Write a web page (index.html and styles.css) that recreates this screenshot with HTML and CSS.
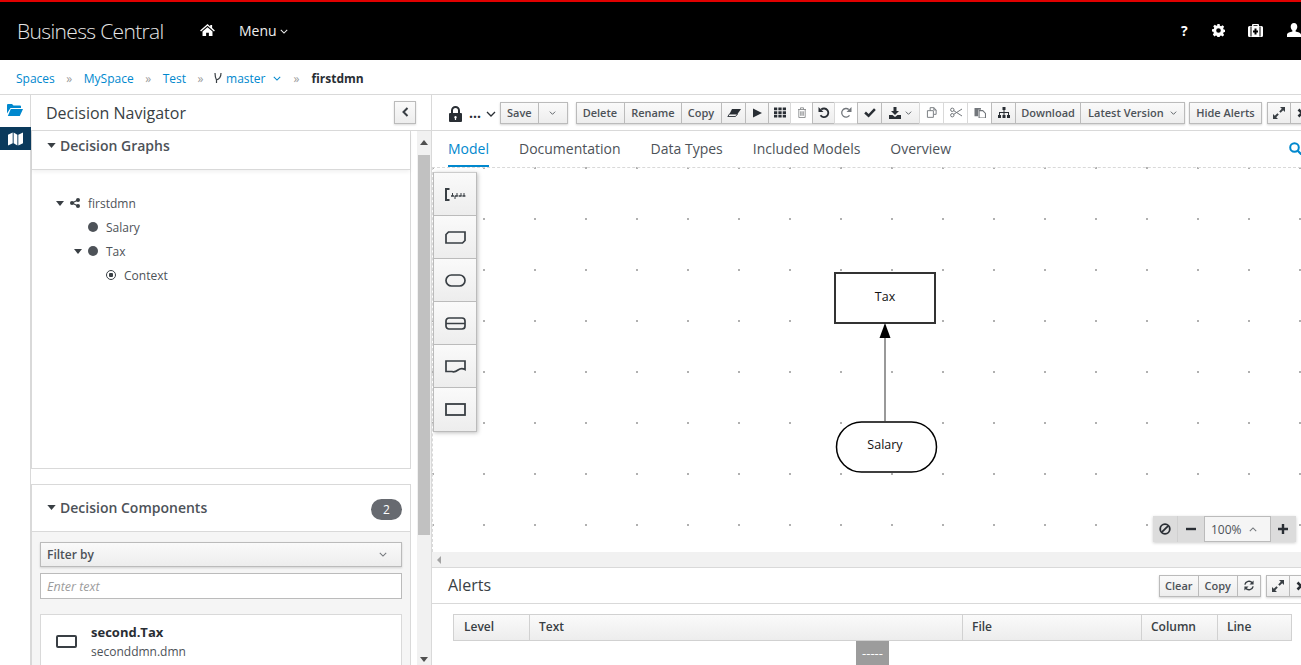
FILE: index.html
```html
<!DOCTYPE html>
<html lang="en">
<head>
<meta charset="utf-8">
<title>Business Central</title>
<link rel="stylesheet" href="styles.css">
</head>
<body>
<svg class="sprite" aria-hidden="true">
  <symbol id="chev" viewBox="0 0 10 6"><path d="M1 1l4 4 4-4" fill="none" stroke="currentColor" stroke-width="1.3"/></symbol>
  <symbol id="caret" viewBox="0 0 10 6"><path d="M0 0h10L5 6z" fill="currentColor"/></symbol>
  <symbol id="expand" viewBox="0 0 12 12"><path d="M7 0h5v5l-1.8-1.8L7.6 5.8 6.2 4.4l2.6-2.6zM5 12H0V7l1.8 1.8 2.6-2.6 1.4 1.4-2.6 2.6z" fill="currentColor"/></symbol>
  <symbol id="close" viewBox="0 0 10 10"><path d="M1.5 1.5l7 7M8.5 1.5l-7 7" stroke="currentColor" stroke-width="2.6" fill="none"/></symbol>
</svg>

<header class="topbar">
  <div class="brand">Business Central</div>
  <svg class="home" viewBox="0 0 16 13"><path d="M8 0l3 2.6V1h2v3.3L16 7l-1 1-7-6-7 6-1-1zM2.6 8.2L8 3.6l5.4 4.6V13H9.5V9.5h-3V13H2.6z" fill="#fff"/></svg>
  <div class="menu">Menu <svg class="chev-menu"><use href="#chev"/></svg></div>
  <div class="utilities">
    <span class="help">?</span>
    <svg class="util" viewBox="0 0 14 14"><path d="M5.8 0h2.4l.3 1.9 1.3.5L11.4 1.3l1.7 1.7-1.1 1.6.5 1.3 1.9.3v2.4l-1.9.3-.5 1.3 1.1 1.6-1.7 1.7-1.6-1.1-1.3.5-.3 1.9H5.800l-.3-1.900-1.300-.5-1.600 1.100L.9 11.300 2 9.700l-.5-1.300L0 8.100V5.700l1.900-.3.5-1.300L1.300 2.500 3 .8l1.600 1.100 1-.4zM7 4.500A2.500 2.500 0 1 0 7 9.500 2.500 2.500 0 0 0 7 4.500z" fill="#fff" fill-rule="evenodd"/></svg>
    <svg class="util util-kit" viewBox="0 0 15 13"><path d="M5 0h5a1 1 0 0 1 1 1v1h2.500A1.500 1.500 0 0 1 15 3.500v8a1.500 1.500 0 0 1-1.500 1.500h-12A1.500 1.500 0 0 1 0 11.500v-8A1.500 1.500 0 0 1 1.500 2H4V1a1 1 0 0 1 1-1zm.5 1.200V2h4v-.8zM2.500 2.500v10h1v-10zM11.500 2.500v10h1v-10zM6.500 4.500v2H5v2h1.500v2h2v-2H10v-2H8.500v-2z" fill="#fff" fill-rule="evenodd"/></svg>
    <svg class="util util-user" viewBox="0 0 14 14"><path d="M7 0c2 0 3.300 1.600 3.300 3.700 0 1.500-.7 2.900-1.700 3.700v1.100c2.200.5 5.400 1.300 5.400 3.300V14H0v-2.200c0-2 3.200-2.800 5.400-3.300V7.400c-1-.8-1.700-2.200-1.700-3.700C3.700 1.600 5 0 7 0z" fill="#fff"/></svg>
  </div>
</header>

<nav class="crumbs">
  <a class="crumb">Spaces</a><span class="sep">»</span>
  <a class="crumb">MySpace</a><span class="sep">»</span>
  <a class="crumb">Test</a><span class="sep">»</span>
  <svg class="branch" viewBox="0 0 8 12"><path d="M1 1c0 3 .5 5 1.500 7M2.500 8v3M7 1C7 4 5.500 7 2.500 8" fill="none" stroke="#393f44" stroke-width="1.200"/></svg>
  <a class="crumb crumb-branch">master</a>
  <svg class="chev-crumb"><use href="#chev"/></svg><span class="sep sep-last">»</span>
  <strong class="crumb-current">firstdmn</strong>
</nav>

<main class="workspace">
  <aside class="rail">
    <svg class="rail-folder" viewBox="0 0 16 13"><path d="M0 2a1 1 0 0 1 1-1h4l1.500 1.500H13a1 1 0 0 1 1 1V5H3.500L0 10.500zM3.800 6H16l-3.200 7H.8z" fill="#0088ce"/></svg>
    <div class="rail-active">
      <svg class="rail-map" viewBox="0 0 16 14"><path d="M0 2.500L5 0v11.500L0 14zM6 0l4 2.500V14l-4-2.500zM11 2.500L16 0v11.500L11 14z" fill="#fff"/></svg>
    </div>
  </aside>

  <section class="navigator">
    <div class="nav-head">
      <h2 class="nav-title">Decision Navigator</h2>
      <button class="collapse"><svg viewBox="0 0 7 10"><path d="M5.500 1L1.500 5l4 4" fill="none" stroke="#393f44" stroke-width="2"/></svg></button>
    </div>
    <div class="nav-body">
      <div class="nav-scroll">
        <div class="graphs">
          <div class="graphs-head">
            <svg class="card-caret"><use href="#caret"/></svg>
            <h3 class="card-title">Decision Graphs</h3>
          </div>
          <ul class="tree">
            <li class="tree-row lvl0">
              <svg class="tree-caret"><use href="#caret"/></svg>
              <svg class="tree-share" viewBox="0 0 10 10"><circle cx="2" cy="5" r="2" fill="#393f44"/><circle cx="8" cy="2" r="2" fill="#393f44"/><circle cx="8" cy="8" r="2" fill="#393f44"/><path d="M2 5l6-3M2 5l6 3" stroke="#393f44" stroke-width="1.200"/></svg>
              <span>firstdmn</span>
            </li>
            <li class="tree-row lvl1"><i class="dot"></i><span>Salary</span></li>
            <li class="tree-row lvl1b">
              <svg class="tree-caret"><use href="#caret"/></svg>
              <i class="dot"></i><span>Tax</span>
            </li>
            <li class="tree-row lvl2"><i class="target"></i><span>Context</span></li>
          </ul>
        </div>

        <div class="components">
          <div class="comp-head">
            <svg class="card-caret"><use href="#caret"/></svg>
            <h3 class="card-title">Decision Components</h3>
            <span class="badge">2</span>
          </div>
          <div class="comp-body">
            <div class="select"><span>Filter by</span><svg class="chev-select"><use href="#chev"/></svg></div>
            <div class="input">Enter text</div>
            <div class="comp-item">
              <svg class="comp-icon" viewBox="0 0 21 13"><rect x="1" y="1" width="19" height="11" rx="1" fill="none" stroke="#393f44" stroke-width="2"/></svg>
              <div class="comp-text">
                <div class="comp-name">second.Tax</div>
                <div class="comp-file">seconddmn.dmn</div>
              </div>
            </div>
          </div>
        </div>
      </div>
      <div class="vscroll">
        <i class="arrow-up"></i>
        <i class="vthumb"></i>
        <i class="arrow-down"></i>
      </div>
    </div>
  </section>

  <section class="editor">
    <div class="toolbar">
      <svg class="lock" viewBox="0 0 13 16"><path d="M2 7V4.500a4.500 4.500 0 0 1 9 0V7h1a1 1 0 0 1 1 1v7a1 1 0 0 1-1 1H1a1 1 0 0 1-1-1V8a1 1 0 0 1 1-1zm2 0h5V4.500a2.500 2.500 0 0 0-5 0zm2.500 3a1.300 1.300 0 0 0-.6 2.400V14h1.200v-1.600A1.300 1.300 0 0 0 6.500 10z" fill="#292e34" fill-rule="evenodd"/></svg>
      <span class="ellipsis">...</span>
      <svg class="chev-lock"><use href="#chev"/></svg>
      <div class="btn-group g-save">
        <button class="btn">Save</button>
        <button class="btn btn-caret"><svg class="chev-btn"><use href="#chev"/></svg></button>
      </div>
      <div class="btn-group g-main">
        <button class="btn btn-delete">Delete</button>
        <button class="btn">Rename</button>
        <button class="btn btn-copy">Copy</button>
        <button class="btn btn-icon btn-24"><svg class="ico-eraser" viewBox="0 0 14 8"><path d="M5 0h9L10.500 5H2.500z" fill="#292e34"/><path d="M2.500 5h8L8.500 7.500H.8z" fill="none" stroke="#292e34" stroke-width=".9"/></svg></button>
        <button class="btn btn-icon"><svg class="ico-play" viewBox="0 0 10 10"><path d="M0 0l10 5-10 5z" fill="#292e34"/></svg></button>
        <button class="btn btn-icon btn-22"><svg viewBox="0 0 11 9"><path d="M0 0h3v2.500H0zM4 0h3v2.500H4zM8 0h3v2.500H8zM0 3.300h3v2.500H0zM4 3.300h3v2.500H4zM8 3.300h3v2.500H8zM0 6.500h3V9H0zM4 6.500h3V9H4zM8 6.500h3V9H8z" fill="#292e34"/></svg></button>
        <button class="btn btn-icon btn-22 btn-off"><svg viewBox="0 0 9 11"><path d="M.5 2.500h8M3 2.500V.8h3v1.700M1.300 2.500v8h6.400v-8M3.200 4.300v4.500M4.500 4.300v4.500M5.800 4.300v4.500" fill="none" stroke="#8b8d8f" stroke-width=".9"/></svg></button>
        <button class="btn btn-icon btn-22"><svg viewBox="0 0 11 11"><path d="M2.700 2.500A4.300 4.300 0 1 1 2 8.300" fill="none" stroke="#292e34" stroke-width="1.800"/><path d="M0 0v5h5z" fill="#292e34"/></svg></button>
        <button class="btn btn-icon btn-off"><svg viewBox="0 0 11 11"><path d="M8.300 2.500A4.300 4.300 0 1 0 9 8.300" fill="none" stroke="#72767b" stroke-width="1.300"/><path d="M11 0v5H6z" fill="#72767b"/></svg></button>
        <button class="btn btn-icon btn-24"><svg viewBox="0 0 11 9"><path d="M1 4.500l3.200 3L10 1.500" fill="none" stroke="#292e34" stroke-width="2.300"/></svg></button>
        <button class="btn btn-dl"><svg class="dl-icon" viewBox="0 0 12 12"><path d="M4.500 0h3v4H10L6 8 2 4h2.500zM0 8h3.500L6 10l2.500-2H12v4H0z" fill="#292e34"/></svg><svg class="chev-btn"><use href="#chev"/></svg></button>
        <button class="btn btn-icon btn-24 btn-off"><svg viewBox="0 0 12 12"><path d="M4 4V.7h4l2.500 2.500V8H8M1 4h6.500v7.300H1zM8 .7v2.500h2.500" fill="none" stroke="#72767b" stroke-width="1"/></svg></button>
        <button class="btn btn-icon btn-24 btn-off"><svg viewBox="0 0 12 10"><circle cx="2.300" cy="2.300" r="1.700" fill="none" stroke="#72767b"/><circle cx="2.300" cy="7.700" r="1.700" fill="none" stroke="#72767b"/><path d="M3.800 3.200L12 8.500M3.800 6.800L12 1.500" stroke="#72767b"/></svg></button>
        <button class="btn btn-icon btn-24 btn-off"><svg viewBox="0 0 12 12"><path d="M0 1h7v2H4v7H0z" fill="#72767b"/><path d="M5 4h4l3 3v5H5z" fill="none" stroke="#72767b" stroke-width="1.200"/></svg></button>
        <button class="btn btn-icon btn-24"><svg viewBox="0 0 12 11"><path d="M4.500 0h3v3h-1v2H11v3h1v3H9V8h1V6H6.500v2h1v3h-3V8h1V6H2v2h1v3H0V8h1V5h4.500V3h-1z" fill="#292e34"/></svg></button>
        <button class="btn btn-download">Download</button>
        <button class="btn btn-latest">Latest Version<svg class="chev-btn"><use href="#chev"/></svg></button>
      </div>
      <button class="btn btn-solo">Hide Alerts</button>
      <div class="btn-group g-win">
        <button class="btn btn-icon"><svg class="ico-expand"><use href="#expand"/></svg></button>
        <button class="btn btn-icon"><svg class="ico-close"><use href="#close"/></svg></button>
      </div>
    </div>

    <div class="tabs">
      <a class="tab tab-active">Model</a>
      <a class="tab">Documentation</a>
      <a class="tab">Data Types</a>
      <a class="tab">Included Models</a>
      <a class="tab">Overview</a>
      <svg class="tab-search" viewBox="0 0 13 13"><circle cx="5.500" cy="5.500" r="4.300" fill="none" stroke="#0088ce" stroke-width="2"/><path d="M8.700 8.700L12.500 12.500" stroke="#0088ce" stroke-width="2.200"/></svg>
    </div>

    <div class="canvas">
      <svg class="diagram" viewBox="0 0 868 385">
        <rect x="402" y="106" width="100" height="50" fill="#fff" stroke="#333" stroke-width="2"/>
        <text x="452" y="134" class="node-label">Tax</text>
        <path d="M452 254V171" stroke="#777" stroke-width="1.500"/>
        <path d="M452 156l5.500 15h-11z" fill="#000"/>
        <rect x="403.500" y="255" width="100" height="50" rx="25" fill="#fff" stroke="#000" stroke-width="1.500"/>
        <text x="452" y="282" class="node-label">Salary</text>
      </svg>
      <div class="palette">
        <button class="pal-btn"><svg viewBox="0 0 21 13"><path d="M4.500 1H1v11h3.500" fill="none" stroke="#393f44" stroke-width="2"/><path d="M6 8h15" stroke="#393f44" stroke-width="1.600" stroke-dasharray="3 .8"/><path d="M7.500 5v3M12 5v3M16 5v3M19 5v3M10 8v3" stroke="#393f44"/></svg></button>
        <button class="pal-btn"><svg viewBox="0 0 21 13"><path d="M3.500 1H20v8.500L17.500 12H1V3.500z" fill="none" stroke="#393f44" stroke-width="1.700"/></svg></button>
        <button class="pal-btn"><svg viewBox="0 0 21 13"><rect x="1" y="1" width="19" height="11" rx="5.500" fill="none" stroke="#393f44" stroke-width="1.700"/></svg></button>
        <button class="pal-btn"><svg viewBox="0 0 21 13"><rect x="1" y="1" width="19" height="11" rx="3" fill="none" stroke="#393f44" stroke-width="1.700"/><path d="M1 6.500h19" stroke="#393f44" stroke-width="1.500"/></svg></button>
        <button class="pal-btn"><svg viewBox="0 0 21 13"><path d="M1 1h19v8.500c-3-1.500-5-1-7 .5s-4 2.500-6 1.500H1z" fill="none" stroke="#393f44" stroke-width="1.700"/></svg></button>
        <button class="pal-btn"><svg viewBox="0 0 21 13"><rect x="1" y="1" width="19" height="11" fill="none" stroke="#393f44" stroke-width="1.800"/></svg></button>
      </div>
      <div class="zoomer">
        <span class="zoom-btn"><svg viewBox="0 0 12 12"><circle cx="6" cy="6" r="4.800" fill="none" stroke="#292e34" stroke-width="1.800"/><path d="M2.800 9.200l6.400-6.400" stroke="#292e34" stroke-width="1.800"/></svg></span>
        <span class="zoom-btn zoom-minus"><svg viewBox="0 0 12 12"><path d="M1 6h10" stroke="#292e34" stroke-width="2.400"/></svg></span>
        <span class="zoom-value">100%<svg class="chev-zoom"><use href="#chev"/></svg></span>
        <span class="zoom-btn zoom-plus"><svg viewBox="0 0 12 12"><path d="M1 6h10M6 1v10" stroke="#292e34" stroke-width="2.400"/></svg></span>
      </div>
    </div>
    <div class="hscroll"><i class="arrow-left"></i></div>

    <div class="alerts-head">
      <h2 class="alerts-title">Alerts</h2>
      <div class="btn-group">
        <button class="btn btn-clear">Clear</button>
        <button class="btn">Copy</button>
        <button class="btn btn-icon"><svg viewBox="0 0 12 12"><path d="M1.500 5A4.600 4.600 0 0 1 9.500 3" fill="none" stroke="#393f44" stroke-width="1.600"/><path d="M10.500 7A4.600 4.600 0 0 1 2.500 9" fill="none" stroke="#393f44" stroke-width="1.600"/><path d="M11 .5V5H6.500zM1 11.500V7h4.500z" fill="#393f44"/></svg></button>
      </div>
      <div class="btn-group g-win g-win-alerts">
        <button class="btn btn-icon"><svg class="ico-expand"><use href="#expand"/></svg></button>
        <button class="btn btn-icon"><svg class="ico-close"><use href="#close"/></svg></button>
      </div>
    </div>
    <div class="alerts-body">
      <div class="alert-table">
        <div class="th">Level</div>
        <div class="th">Text</div>
        <div class="th">File</div>
        <div class="th">Column</div>
        <div class="th">Line</div>
      </div>
      <div class="pager">-----</div>
    </div>
  </section>
</main>
</body>
</html>
```
FILE: styles.css
```css
* { box-sizing: border-box; }
html, body { margin: 0; height: 100%; }
body {
  width: 1301px;
  height: 665px;
  overflow: hidden;
  font-family: "Open Sans", "Noto Sans", sans-serif;
  color: #393f44;
  background: #fff;
  display: flex;
  flex-direction: column;
}
svg { display: block; flex: none; }
button { font: inherit; margin: 0; }
h2, h3, ul { margin: 0; padding: 0; list-style: none; }
.sprite { width: 0; height: 0; position: absolute; }

/* top bar */
.topbar {
  flex: none;
  height: 60px;
  background: #000;
  border-top: 2px solid #e00000;
  display: flex;
  align-items: center;
  color: #fff;
  padding-left: 17px;
}
.brand { font-size: 21px; font-weight: 300; letter-spacing: -.65px; color: #e6e6e6; width: 183px; }
.home { width: 15px; height: 12px; margin-right: 24px; margin-top: -2px; }
.menu { font-size: 14px; display: flex; align-items: center; gap: 3px; color: #eee; margin-top: -2px; }
.chev-menu { width: 8px; height: 5px; margin-top: 2px; }
.utilities { margin-left: auto; display: flex; align-items: center; margin-top: -2px; }
.help { font-size: 14px; font-weight: 700; width: 31px; }
.util { width: 13px; height: 13px; margin-right: 23px; }
.util-kit { width: 15px; margin-right: 24px; }
.util-user { width: 14px; height: 14px; margin-right: 0; }

/* breadcrumb */
.crumbs {
  flex: none;
  height: 35px;
  border-bottom: 1px solid #d9d9d9;
  padding: 2px 0 0 16px;
  display: flex;
  align-items: center;
  font-size: 12px;
}
.crumb { color: #0088ce; }
.sep { color: #9c9c9c; width: 29px; text-align: center; }
.branch { width: 8px; height: 12px; margin-right: 4px; margin-left: -1px; }
.chev-crumb { width: 8px; height: 5px; margin-left: 8px; color: #0088ce; }
.sep-last { width: 30px; }
.crumb-current { font-weight: 700; color: #292e34; }

/* workspace */
.workspace { flex: 1; min-height: 0; display: flex; }
.rail { flex: none; width: 31px; border-right: 1px solid #d9d9d9; padding-top: 8px; }
.rail-folder { width: 16px; height: 13px; margin: 0 0 0 7px; }
.rail-active { height: 23px; margin-top: 11px; margin-right: -1px; background: #0b3a5c; display: flex; align-items: center; justify-content: center; position: relative; }
.rail-map { width: 15px; height: 14px; }

/* navigator */
.navigator { flex: none; width: 401px; border-right: 1px solid #d9d9d9; display: flex; flex-direction: column; }
.nav-head {
  flex: none;
  height: 36px;
  border-bottom: 1px solid #d9d9d9;
  display: flex;
  align-items: center;
  padding-left: 15px;
  padding-right: 15px;
  position: relative;
}
.nav-title { font-size: 16px; font-weight: 400; color: #393f44; }
.collapse {
  margin-left: auto;
  width: 22px;
  height: 23px;
  margin-top: -1px;
  padding: 0;
  border: 1px solid #bbb;
  background: linear-gradient(#fafafa, #ededed);
  box-shadow: 0 1px 2px rgba(0, 0, 0, .15);
  display: flex;
  align-items: center;
  justify-content: center;
}
.collapse svg { width: 7px; height: 10px; }
.nav-body { flex: 1; min-height: 0; display: flex; }
.nav-scroll { flex: none; width: 386px; overflow: hidden; }

.graphs { width: 380px; height: 338px; border: 1px solid #d9d9d9; border-top: 0; }
.graphs-head {
  height: 39px;
  display: flex;
  align-items: center;
  padding: 0 0 10px 15px;
  border-bottom: 1px solid #d9d9d9;
  box-shadow: 0 2px 4px rgba(0, 0, 0, .06);
}
.card-caret { width: 9px; height: 5px; margin-right: 4px; color: #393f44; }
.card-title { font-size: 14px; font-weight: 600; color: #4d5258; }
.tree { padding-top: 21px; font-size: 12px; color: #4d5258; }
.tree-row { height: 24px; display: flex; align-items: center; }
.lvl0 { padding-left: 24px; }
.lvl1 { padding-left: 56px; }
.lvl1b { padding-left: 42px; }
.lvl2 { padding-left: 74px; }
.tree-caret { width: 8px; height: 5px; margin-right: 6px; color: #393f44; }
.tree-share { width: 10px; height: 10px; margin-right: 8px; }
.dot { width: 10px; height: 10px; border-radius: 50%; background: #4d5258; margin-right: 8px; flex: none; }
.target { width: 10px; height: 10px; border-radius: 50%; border: 1.500px solid #393f44; margin-right: 8px; flex: none; position: relative; background: radial-gradient(circle, #393f44 0, #393f44 2px, transparent 2.500px); }

.components { width: 380px; margin-top: 15px; border: 1px solid #d9d9d9; background: #f5f5f5; }
.comp-head { height: 47px; background: #fff; border-bottom: 1px solid #d9d9d9; display: flex; align-items: center; padding: 0 8px 2px 15px; }
.badge { margin-left: auto; width: 31px; height: 21px; border-radius: 11px; background: #676a70; color: #fff; font-size: 12px; display: flex; align-items: center; justify-content: center; margin-top: 4px; }
.comp-body { padding: 10px 8px 0; }
.select {
  height: 25px;
  border: 1px solid #bbb;
  background: linear-gradient(#fafafa, #ededed);
  box-shadow: 0 1px 2px rgba(0, 0, 0, .15);
  font-size: 12px;
  font-weight: 600;
  color: #4d5258;
  display: flex;
  align-items: center;
  justify-content: space-between;
  padding: 0 14px 0 6px;
}
.chev-select { width: 8px; height: 5px; color: #72767b; }
.input { height: 26px; margin-top: 6px; border: 1px solid #bbb; background: #fff; font-size: 12.500px; font-style: italic; color: #9c9c9c; display: flex; align-items: center; padding-left: 6px; }
.comp-item { margin-top: 15px; height: 70px; background: #fff; border: 1px solid #d9d9d9; display: flex; align-items: flex-start; padding: 8px 0 0 15px; }
.comp-icon { width: 21px; height: 13px; margin: 12px 14px 0 0; }
.comp-name { font-size: 13px; font-weight: 700; color: #292e34; line-height: 18px; }
.comp-file { font-size: 12px; color: #4d5258; line-height: 22px; }

.vscroll { flex: none; width: 14px; background: #f1f1f1; border-left: 0; display: flex; flex-direction: column; align-items: center; padding-top: 9px; position: relative; }
.arrow-up { width: 0; height: 0; border: 4px solid transparent; border-top: 0; border-bottom: 5px solid #505050; }
.vthumb { width: 12px; height: 380px; background: #c1c1c1; margin-top: 10px; }
.arrow-down { width: 0; height: 0; margin-top: 122px; border: 4px solid transparent; border-bottom: 0; border-top: 5px solid #505050; }

/* editor */
.editor { flex: 1; min-width: 0; display: flex; flex-direction: column; overflow: hidden; }
.toolbar {
  flex: none;
  height: 36px;
  border-bottom: 1px solid #d9d9d9;
  display: flex;
  align-items: center;
  padding: 0 0 0 17px;
  white-space: nowrap;
  overflow: hidden;
}
.lock { width: 13px; height: 16px; margin-top: 2px; }
.ellipsis { font-size: 14px; font-weight: 700; color: #292e34; width: 12px; margin-left: 7px; line-height: 1; }
.chev-lock { width: 10px; height: 6px; margin: 2px 4px 0 5px; color: #292e34; }
.btn-group { display: flex; flex: none; box-shadow: 0 1px 2px rgba(0, 0, 0, .18); }
.g-save { margin-right: 8px; }
.g-win { margin-left: 5px; }
.g-win-alerts { margin-right: -12px; }
.btn {
  flex: none;
  height: 22px;
  padding: 0 6px;
  border: 1px solid #bbb;
  margin-left: -1px;
  background: linear-gradient(#fafafa, #ededed);
  color: #4d5258;
  font-family: "Open Sans", sans-serif;
  font-size: 11px;
  font-weight: 600;
  display: flex;
  align-items: center;
  justify-content: center;
  white-space: nowrap;
}
.btn-group .btn:first-child { margin-left: 0; }
.btn-delete { padding: 0 7px 0 6px; }
.btn-copy { padding: 0 7px 0 6px; }
.btn-clear { padding: 0 5px; }
.btn-download { padding: 0 5px; }
.btn-caret { width: 30px; padding: 0; }
.chev-btn { width: 7px; height: 4px; color: #4d5258; }
.btn-icon { width: 24px; padding: 0; }
.btn-24 { width: 25px; }
.btn-22 { width: 23px; }
.btn-icon svg { width: 12px; height: 11px; }
.btn-icon .ico-eraser { width: 14px; height: 8px; }
.btn-icon .ico-play { width: 9px; height: 10px; }
.btn-off { background: #fff; border-color: #d9d9d9; }
.btn-dl { width: 39px; padding: 0; gap: 4px; }
.dl-icon { width: 12px; height: 12px; }
.btn-latest { gap: 6px; width: 105px; }
.btn-solo { margin-left: 4px; box-shadow: 0 1px 2px rgba(0, 0, 0, .18); width: 73px; padding: 0; }
.btn-icon .ico-expand { width: 12px; height: 12px; color: #393f44; }
.btn-icon .ico-close { width: 10px; height: 10px; color: #292e34; }

.tabs {
  flex: none;
  height: 36px;
  padding-left: 16px;
  display: flex;
  gap: 30px;
  font-size: 14px;
  position: relative;
}
.tab { color: #4d5258; line-height: 36px; height: 36px; }
.tab-active { color: #0088ce; border-bottom: 2px solid #0088ce; }
.tab-search { position: absolute; right: -1px; top: 11px; width: 13px; height: 13px; }

.canvas {
  flex: none;
  height: 385px;
  position: relative;
  border-top: 1px dashed #d9d9d9;
  border-left: 1px dashed #d9d9d9;
  background-image: radial-gradient(circle at 1px 1px, #b0b0b0 0, #b0b0b0 1px, transparent 1.500px);
  background-size: 51px 51px;
  background-position: 50px -1px;
  overflow: hidden;
}
.diagram { position: absolute; left: 0; top: -1px; width: 868px; height: 385px; }
.node-label { font-size: 12.500px; text-anchor: middle; fill: #111; font-family: "Open Sans", sans-serif; }
.palette {
  position: absolute;
  left: 0;
  top: 4px;
  width: 44px;
  display: flex;
  flex-direction: column;
  border: 1px solid #bbb;
  border-top-color: #ccc;
  box-shadow: 1px 1px 4px rgba(0, 0, 0, .25);
}
.pal-btn {
  height: 43px;
  padding: 0;
  border: 0;
  border-bottom: 1px solid #bbb;
  background: linear-gradient(#fafafa, #ededed);
  display: flex;
  align-items: center;
  justify-content: center;
}
.pal-btn:last-child { border-bottom: 0; }
.pal-btn svg { width: 21px; height: 13px; }
.zoomer {
  position: absolute;
  left: 720px;
  top: 348px;
  height: 26px;
  width: 143px;
  display: flex;
  background: #dcdcdc;
  box-shadow: 0 1px 3px rgba(0, 0, 0, .2);
}
.zoom-btn { width: 25px; display: flex; align-items: center; justify-content: center; border-right: 1px solid #d0d0d0; }
.zoom-minus { width: 26px; border-right: 0; }
.zoom-plus { border-right: 0; padding-right: 2px; }
.zoom-btn svg { width: 12px; height: 12px; }
.zoom-value { width: 67px; background: #f5f5f5; border: 1px solid #bbb; font-size: 12px; color: #4d5258; display: flex; align-items: center; padding-left: 6px; gap: 7px; }
.chev-zoom { width: 8px; height: 5px; transform: rotate(180deg); color: #72767b; }

.hscroll { flex: none; height: 15px; background: #f1f1f1; display: flex; align-items: center; padding-left: 5px; }
.arrow-left { width: 0; height: 0; border: 4px solid transparent; border-left: 0; border-right: 4px solid #a3a3a3; }

.alerts-head {
  flex: none;
  height: 37px;
  border-top: 1px solid #d9d9d9;
  border-bottom: 1px solid #d9d9d9;
  display: flex;
  align-items: center;
  padding-left: 16px;
}
.alerts-title { font-size: 16px; font-weight: 400; color: #393f44; margin-right: auto; margin-top: -2px; }
.alerts-body { flex: 1; min-height: 0; padding: 10px 9px 0 21px; display: flex; flex-direction: column; align-items: stretch; position: relative; }
.alert-table { flex: none; display: grid; grid-template-columns: 75px 433px 179px 76px 76px; height: 27px; border: 1px solid #d1d1d1; background: linear-gradient(#fafafa, #ededed); width: 839px; }
.th { font-size: 12px; font-weight: 600; color: #393f44; display: flex; align-items: center; padding: 0 0 2px 9px; border-left: 1px solid #d1d1d1; }
.th:first-child { border-left: 0; padding-left: 10px; }
.pager { width: 33px; height: 24px; background: #9c9c9c; color: #fff; font-size: 13px; display: flex; align-items: center; justify-content: center; margin-left: 403px; }
```
